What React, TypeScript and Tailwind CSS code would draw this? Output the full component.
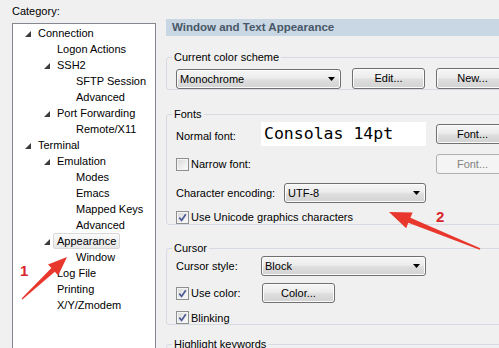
import React from 'react';

type Row = { label: string; level: number; exp?: boolean; sel?: boolean };

const rows: Row[] = [
  { label: 'Connection', level: 0, exp: true },
  { label: 'Logon Actions', level: 1 },
  { label: 'SSH2', level: 1, exp: true },
  { label: 'SFTP Session', level: 2 },
  { label: 'Advanced', level: 2 },
  { label: 'Port Forwarding', level: 1, exp: true },
  { label: 'Remote/X11', level: 2 },
  { label: 'Terminal', level: 0, exp: true },
  { label: 'Emulation', level: 1, exp: true },
  { label: 'Modes', level: 2 },
  { label: 'Emacs', level: 2 },
  { label: 'Mapped Keys', level: 2 },
  { label: 'Advanced', level: 2 },
  { label: 'Appearance', level: 1, exp: true, sel: true },
  { label: 'Window', level: 2 },
  { label: 'Log File', level: 1 },
  { label: 'Printing', level: 1 },
  { label: 'X/Y/Zmodem', level: 1 },
];

const pads = ['pl-[10px]', 'pl-[29px]', 'pl-[48px]'];

const btnFace =
  'border border-[#707070] rounded-[3px] bg-[linear-gradient(#f6f6f6,#ececec_45%,#dedede_55%,#d2d2d2)] shadow-[inset_0_0_0_1px_#fbfbfb]';

function Btn({ children, className = '', disabled }: { children: React.ReactNode; className?: string; disabled?: boolean }) {
  return (
    <div
      className={`shrink-0 w-[73px] h-[20px] flex items-center justify-center leading-none ${
        disabled ? 'border border-[#adb2b5] rounded-[3px] bg-[#f4f4f4] text-[#838383]' : btnFace
      } ${className}`}
    >
      {children}
    </div>
  );
}

function Combo({ children, className = '' }: { children: React.ReactNode; className?: string }) {
  return (
    <div className={`shrink-0 h-[20px] flex items-center pl-[3px] pr-[5px] ${btnFace} ${className}`}>
      <span>{children}</span>
      <svg width="7" height="4" className="ml-auto">
        <polygon points="0,0 7,0 3.5,4" fill="#000" />
      </svg>
    </div>
  );
}

function Check({ checked }: { checked?: boolean }) {
  return (
    <span className="shrink-0 w-[13px] h-[13px] border border-[#8e8f8f] bg-linear-to-br from-[#d8d8d8] to-[#fdfdfd] shadow-[inset_0_0_0_1px_#f4f4f4] flex items-center justify-center">
      {checked && (
        <svg width="9" height="9" viewBox="0 0 9 9">
          <path d="M1.3 4.6 L3.6 7.4 L7.8 1.2" stroke="#4a5a96" strokeWidth="1.7" fill="none" />
        </svg>
      )}
    </span>
  );
}

function arrow(tx: number, ty: number, hx: number, hy: number, headLen: number, headW: number, neckW: number, tailW: number) {
  const len = Math.hypot(hx - tx, hy - ty);
  const ux = (hx - tx) / len;
  const uy = (hy - ty) / len;
  const nx = -uy;
  const ny = ux;
  const bx = hx - ux * headLen;
  const by = hy - uy * headLen;
  const p = (x: number, y: number) => `${x.toFixed(1)},${y.toFixed(1)}`;
  return [
    p(tx + (nx * tailW) / 2, ty + (ny * tailW) / 2),
    p(bx + (nx * neckW) / 2, by + (ny * neckW) / 2),
    p(bx + (nx * headW) / 2, by + (ny * headW) / 2),
    p(hx, hy),
    p(bx - (nx * headW) / 2, by - (ny * headW) / 2),
    p(bx - (nx * neckW) / 2, by - (ny * neckW) / 2),
    p(tx - (nx * tailW) / 2, ty - (ny * tailW) / 2),
  ].join(' ');
}

export default function App() {
  return (
    <div className="relative w-[499px] h-[348px] overflow-hidden bg-[#f0f0f0] text-[11px] text-black font-['Liberation_Sans',Arial,sans-serif] flex">
      {/* category tree */}
      <div className="w-[156px] shrink-0 pl-[12px] pt-[4px] flex flex-col">
        <div className="leading-[14px]">Category:</div>
        <div className="mt-[5px] flex-1 bg-white border border-[#828790] border-b-0 pt-[1px]">
          {rows.map((r, i) => (
            <div key={i} className={`flex items-center h-[16px] ${pads[r.level]}`}>
              <span className="w-[11px] h-[16px] shrink-0 flex items-center">
                {r.exp && (
                  <svg width="6" height="6" className="ml-[2px] mt-[1px]">
                    <polygon points="6,0 6,6 0,6" fill="#3c3c3c" />
                  </svg>
                )}
              </span>
              <span
                className={`h-[16px] px-[3px] border rounded-[2px] leading-[14px] whitespace-nowrap ${
                  r.sel ? 'border-[#d9d9d9] bg-linear-to-b from-[#fafafa] to-[#e8e8e8]' : 'border-transparent'
                }`}
              >
                {r.label}
              </span>
            </div>
          ))}
        </div>
      </div>

      {/* settings panel */}
      <div className="ml-[10px] w-[345px] shrink-0 flex flex-col">
        <div className="mt-[19px] h-[20px] bg-[#c9d6e3] pl-[6px] flex items-center font-bold text-[11.5px] text-[#485868]">
          Window and Text Appearance
        </div>

        <fieldset className="mt-[14px] h-[55px] min-w-0 border border-[#d5dbe0] rounded-[3px] pl-[9px]">
          <legend className="ml-[-4px] px-[2px] leading-[14px]">Current color scheme</legend>
          <div className="mt-[4px] h-[21px] flex items-center">
            <Combo className="w-[165px]">Monochrome</Combo>
            <Btn className="ml-[11px] h-[21px]">Edit...</Btn>
            <Btn className="ml-[11px] h-[21px]">New...</Btn>
          </div>
        </fieldset>

        <fieldset className="mt-[17px] h-[127px] min-w-0 border border-[#d5dbe0] rounded-[3px] pl-[9px]">
          <legend className="ml-[-4px] px-[2px] leading-[14px]">Fonts</legend>
          <div className="mt-[1px] h-[24px] flex items-center">
            <span className="w-[85px] shrink-0 pt-[3px]">Normal font:</span>
            <div className="w-[165px] h-[24px] shrink-0 bg-white flex items-center pl-[3px] font-['DejaVu_Sans_Mono',monospace] text-[16.5px]">
              Consolas 14pt
            </div>
            <Btn className="ml-[10px] h-[19px]">Font...</Btn>
          </div>
          <div className="mt-[8px] h-[20px] flex items-center">
            <div className="w-[250px] shrink-0 flex items-center gap-[2px]">
              <Check />
              <span>Narrow font:</span>
            </div>
            <Btn disabled className="ml-[10px]">Font...</Btn>
          </div>
          <div className="mt-[9px] h-[20px] flex items-center">
            <span className="w-[108px] shrink-0">Character encoding:</span>
            <Combo className="w-[142px]">UTF-8</Combo>
          </div>
          <div className="mt-[7px] h-[14px] flex items-center gap-[2px]">
            <Check checked />
            <span>Use Unicode graphics characters</span>
          </div>
        </fieldset>

        <fieldset className="mt-[16px] h-[99px] min-w-0 border border-[#d5dbe0] rounded-[3px] pl-[9px]">
          <legend className="ml-[-4px] px-[2px] leading-[14px]">Cursor</legend>
          <div className="mt-[1px] h-[20px] flex items-center">
            <span className="w-[85px] shrink-0">Cursor style:</span>
            <Combo className="w-[165px]">Block</Combo>
          </div>
          <div className="mt-[7px] h-[20px] flex items-center">
            <div className="w-[86px] shrink-0 flex items-center gap-[2px]">
              <Check checked />
              <span>Use color:</span>
            </div>
            <Btn>Color...</Btn>
          </div>
          <div className="mt-[8px] h-[13px] flex items-center gap-[2px]">
            <Check checked />
            <span>Blinking</span>
          </div>
        </fieldset>

        <fieldset className="mt-[12px] h-[40px] min-w-0 border border-[#d5dbe0] rounded-[3px] pl-[9px]">
          <legend className="ml-[-4px] px-[2px] leading-[14px]">Highlight keywords</legend>
        </fieldset>
      </div>

      {/* annotation arrows */}
      <svg className="absolute inset-0 pointer-events-none" width="499" height="348">
        <polygon points={arrow(22, 299, 67, 257, 19, 15, 5, 1.2)} fill="#e8372c" />
        <polygon points={arrow(480, 249, 389, 212, 22, 17, 5.5, 1.5)} fill="#e8372c" />
        <text x="20" y="276" fill="#d9262c" fontSize="15" fontWeight="bold" fontFamily="Liberation Sans, Arial, sans-serif">
          1
        </text>
        <text x="436" y="222" fill="#d9262c" fontSize="15" fontWeight="bold" fontFamily="Liberation Sans, Arial, sans-serif">
          2
        </text>
      </svg>
    </div>
  );
}
